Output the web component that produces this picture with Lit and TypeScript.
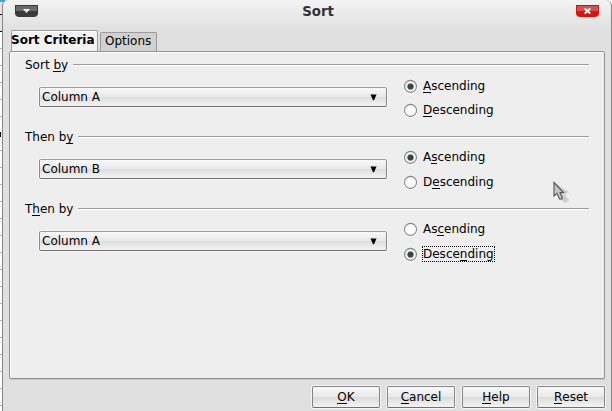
import { LitElement, html, css, svg } from "lit";
import { customElement, property } from "lit/decorators.js";

/** Renders a label whose mnemonic letter (at index `key`) is underlined. */
const mnemonic = (text: string, key: number) =>
  html`${text.slice(0, key)}<span class="key">${text[key]}</span>${text.slice(key + 1)}`;

const keyStyle = css`
  .key {
    display: inline-block;
    height: 14px;
    line-height: 14px;
    background: linear-gradient(#000, #000) 0 13px / 100% 1px no-repeat;
  }
`;

@customElement("radio-option")
class RadioOption extends LitElement {
  @property() label = "";
  @property({ type: Number }) key = 0;
  @property({ type: Boolean }) checked = false;
  @property({ type: Boolean }) focused = false;

  static styles = [
    keyStyle,
    css`
      :host {
        display: flex;
        align-items: center;
        height: 16px;
      }
      .dot {
        display: block;
        width: 15px;
        height: 15px;
        flex: none;
        margin: 1px 5px 0 0;
      }
      .text {
        height: 14px;
        line-height: 14px;
        white-space: nowrap;
      }
      .focused {
        outline: 1px dotted #000;
      }
    `,
  ];

  render() {
    return html`<svg class="dot" viewBox="0 0 15 15">
        <circle cx="7.5" cy="7.9" r="7" fill="#fff" />
        <circle cx="7.5" cy="7.4" r="6" fill="${this.checked ? "#f0f0f0" : "#fff"}" stroke="#858585" stroke-width="1.1" />
        ${this.checked ? svg`<circle cx="7.5" cy="7.5" r="3.1" fill="#3c4444" />` : ""}
      </svg>
      <span class="text ${this.focused ? "focused" : ""}">${mnemonic(this.label, this.key)}</span>`;
  }
}

@customElement("sort-group")
class SortGroup extends LitElement {
  @property() label = "";
  @property({ type: Number }) key = 0;
  @property() column = "";
  @property({ type: Number }) ascKey = 0;
  @property({ type: Number }) descKey = 0;
  @property({ type: Boolean }) descending = false;
  @property({ type: Boolean }) focused = false;
  @property({ type: Number }) level = 0;

  static styles = [
    keyStyle,
    css`
      :host {
        display: block;
        height: 72px;
      }
      .legend {
        display: flex;
        align-items: center;
        gap: 5px;
        height: 14px;
        line-height: 14px;
        white-space: nowrap;
      }
      .rule {
        flex: 1;
        height: 1px;
        background: #9c9c9c;
        border-bottom: 1px solid #fff;
      }
      .body {
        display: grid;
        grid-template-columns: 348px auto;
        column-gap: 16px;
        padding-left: 14px;
        align-items: start;
      }
      .select {
        box-sizing: border-box;
        height: 20px;
        margin-top: 15px;
        padding: 0 9px 0 2px;
        border: 1px solid #898989;
        border-top-color: #9c9c9c;
        border-bottom-color: #707070;
        border-radius: 2px;
        box-shadow: 0 0 0 1px #f8f8f8;
        background: linear-gradient(#f8f8f8, #e9e9e9 48%, #dcdcdc 52%, #f4f4f4);
        display: flex;
        align-items: center;
        justify-content: space-between;
        line-height: 18px;
      }
      .arrow {
        width: 7px;
        height: 7px;
        margin-top: 1px;
      }
      .options {
        display: grid;
        align-content: start;
        padding-top: 6px;
        row-gap: 8px;
      }
      .l1,
      .l2 {
        padding-top: 5px;
        row-gap: 9px;
      }
    `,
  ];

  render() {
    return html`
      <div class="legend"><span>${mnemonic(this.label, this.key)}</span><span class="rule"></span></div>
      <div class="body">
        <div class="select">
          <span>${this.column}</span>
          <svg class="arrow" viewBox="0 0 7 7"><path d="M.5 .5H6.5L4 6.2H3Z" /></svg>
        </div>
        <div class="options l${this.level}">
          <radio-option label="Ascending" .key=${this.ascKey} ?checked=${!this.descending}></radio-option>
          <radio-option
            label="Descending"
            .key=${this.descKey}
            ?checked=${this.descending}
            ?focused=${this.focused}
          ></radio-option>
        </div>
      </div>
    `;
  }
}

@customElement("app-root")
class AppRoot extends LitElement {
  static styles = [
    keyStyle,
    css`
      :host {
        display: block;
        position: relative;
        width: 612px;
        height: 411px;
        overflow: hidden;
        font: 12px "DejaVu Sans", sans-serif;
        color: #000;
        background: repeating-linear-gradient(#fff 0 14px, #b4b4b4 14px 15px, #fff 15px 17px);
      }
      .sheet {
        position: absolute;
        left: 0;
        top: 0;
        width: 8px;
        height: 140px;
      }
      .dialog {
        position: relative;
        box-sizing: border-box;
        height: 420px;
        margin-left: 2px;
        border: 1px solid #858585;
        border-top: 0;
        border-radius: 6px 6px 0 0;
        background: linear-gradient(#f3f3f3, #e0e0e0 30px);
        padding: 0 6px;
      }
      .titlebar {
        display: grid;
        grid-template-columns: 23px 1fr 23px;
        height: 30px;
        padding: 5px 6px 0 6px;
        box-sizing: border-box;
      }
      .titlebar svg {
        width: 23px;
        height: 12px;
      }
      .title {
        text-align: center;
        font-size: 13.33px;
        font-weight: bold;
        line-height: 14px;
        color: #303436;
        padding-left: 22px;
      }
      .tabs {
        display: flex;
        align-items: flex-end;
        height: 21px;
        gap: 2px;
        padding-left: 2px;
      }
      .tab {
        box-sizing: border-box;
        border: 1px solid #9b9b9b;
        border-bottom: 0;
        border-radius: 2px 2px 0 0;
        white-space: nowrap;
      }
      .active {
        width: 87px;
        height: 21px;
        line-height: 18px;
        font-weight: bold;
        background: #f2f2f2;
        box-shadow: inset 0 1px #fff;
        text-indent: -1px;
      }
      .inactive {
        width: 57px;
        height: 19px;
        line-height: 17px;
        padding-left: 4px;
        background: #d1d1d1;
      }
      .panel {
        box-sizing: border-box;
        height: 328px;
        border: 1px solid #929292;
        border-radius: 2px;
        box-shadow: inset 1px 1px #fff, 0 1px #c4c4c4;
        background: #eee;
        padding: 6px 15px 0;
      }
      .buttons {
        display: flex;
        justify-content: flex-end;
        gap: 7px;
        padding-top: 7px;
      }
      .button {
        box-sizing: border-box;
        width: 68px;
        height: 22px;
        border: 1px solid #858585;
        border-bottom-color: #707070;
        border-radius: 2px;
        box-shadow: 0 0 0 1px #f5f5f5;
        background: linear-gradient(#f9f9f9, #e9e9e9 48%, #dcdcdc 52%, #f4f4f4);
        text-align: center;
        line-height: 20px;
      }
      .pointer {
        position: absolute;
        left: 552px;
        top: 181px;
        width: 20px;
        height: 24px;
      }
    `,
  ];

  render() {
    return html`
      <svg class="sheet" viewBox="0 0 8 140" shape-rendering="crispEdges">
        <rect width="8" height="14" fill="#e4e4e4" />
        <rect width="5" height="2" fill="#39a7cf" />
        <path d="M0 14.5H3M0 31.5H3" stroke="#000" />
        <rect y="15" width="3" height="16" fill="#e4e4e4" />
        <rect y="132" width="1" height="5" fill="#000" />
      </svg>
      <div class="dialog">
        <div class="titlebar">
          <svg viewBox="0 0 23 12">
            <path d="M0 0H23V9Q22 12 19 12H4Q1 12 0 9Z" fill="#3b3b3b" />
            <path d="M1 1H22V6H1Z" fill="#6b6b6b" />
            <path d="M8 4H15L11.5 8Z" fill="#fff" />
          </svg>
          <span class="title">Sort</span>
          <svg viewBox="0 0 23 12">
            <path d="M0 0H23V9Q22 12 19 12H4Q1 12 0 9Z" fill="#d8150d" />
            <path d="M1 1H22V6H1Z" fill="#cb5652" />
            <path d="M0 .5H23" stroke="#8f2a27" />
            <path d="M8.7 3.5L14.3 8.5M14.3 3.5L8.7 8.5" stroke="#fff" stroke-width="1.8" />
          </svg>
        </div>
        <div class="tabs">
          <div class="tab active">Sort Criteria</div>
          <div class="tab inactive">Options</div>
        </div>
        <div class="panel">
          <sort-group label="Sort by" .key=${5} column="Column A" .level=${0} .ascKey=${0} .descKey=${0}></sort-group>
          <sort-group label="Then by" .key=${6} column="Column B" .level=${1} .ascKey=${1} .descKey=${1}></sort-group>
          <sort-group
            label="Then by"
            .key=${1}
            column="Column A"
            .level=${2}
            .ascKey=${2}
            .descKey=${5}
            descending
            focused
          ></sort-group>
        </div>
        <div class="buttons">
          ${["OK", "Cancel", "Help", "Reset"].map((b) => html`<div class="button">${mnemonic(b, 0)}</div>`)}
        </div>
      </div>
      <svg class="pointer" viewBox="0 0 20 24">
        <path d="M6 5L15 11L12 14L16 19L13 21L8 17Z" fill="#c9c9c9" stroke="#d3d3d3" stroke-width="2" />
        <path d="M2 1.5V15L5 12.3L7.5 18H10V16L8 11.5H11.5Z" fill="#c6c6c6" stroke="#555" stroke-width="1.1" />
      </svg>
    `;
  }
}
